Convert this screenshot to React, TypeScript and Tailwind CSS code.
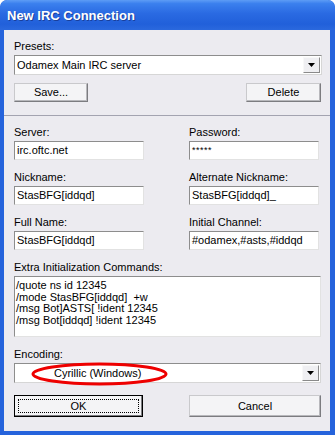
import React from "react";

const font = { fontFamily: '"Liberation Sans", Arial, sans-serif' };

function Label({ children }: { children: React.ReactNode }) {
  return <div className="h-[13px] leading-[13px] text-[11px] text-black">{children}</div>;
}

function TextBox({ value, small }: { value: string; small?: boolean }) {
  return (
    <div
      className={`h-[19px] w-full bg-white border border-t-[#8d8d8d] border-l-[#8d8d8d] border-b-[#e2e2e2] border-r-[#e2e2e2] pl-[2px] leading-[17px] text-black ${
        small ? "text-[9px] tracking-[0.5px]" : "text-[11px]"
      }`}
    >
      {value}
    </div>
  );
}

function ArrowButton() {
  return (
    <div className="absolute right-[1px] top-[1px] bottom-[1px] w-[17px] bg-[#efeff2] border border-t-[#f8f8f8] border-l-[#f8f8f8] border-b-[#8a8a8a] border-r-[#8a8a8a] flex items-center justify-center">
      <svg width="7" height="4" viewBox="0 0 7 4">
        <path d="M0 0H7L3.5 4Z" fill="#000" />
      </svg>
    </div>
  );
}

function Select({ value, indent = 2, children }: { value: string; indent?: number; children?: React.ReactNode }) {
  return (
    <div className="relative h-[20px] w-full bg-white border border-t-[#8d8d8d] border-l-[#8d8d8d] border-b-[#d6d6d6] border-r-[#d6d6d6] text-[11px] leading-[18px] text-black">
      <span style={{ paddingLeft: indent }}>{value}</span>
      <ArrowButton />
      {children}
    </div>
  );
}

function Button({ label, className = "" }: { label: string; className?: string }) {
  return (
    <div
      className={`flex items-center justify-center bg-[#f4f4f6] border border-t-[#c9c9cc] border-l-[#c9c9cc] border-b-[#7c7c80] border-r-[#7c7c80] shadow-[inset_-1px_-1px_0_#b8b8bc] text-[11px] text-black ${className}`}
    >
      {label}
    </div>
  );
}

export default function App() {
  return (
    <div style={font} className="w-[335px] h-[435px] bg-[#2563dc] rounded-t-[7px] flex flex-col overflow-hidden">
      <div className="h-[30px] shrink-0 flex items-center pl-[7px] rounded-t-[7px] bg-[linear-gradient(to_bottom,#5d9cf5_0%,#3b80ee_12%,#2a6ae2_45%,#2160da_80%,#2b69dd_100%)]">
        <span className="text-white font-bold text-[13px] leading-none [text-shadow:1px_1px_0_#1a3f9a]">
          New IRC Connection
        </span>
      </div>
      <div className="flex-1 ml-[4px] mr-[5px] mb-[4px] bg-[#ecebf0] flex flex-col">
        <div className="pl-[10px] pr-[8px] pt-[10px]">
          <Label>Presets:</Label>
          <div className="mt-[2px]">
            <Select value="Odamex Main IRC server" />
          </div>
          <div className="mt-[8px] flex justify-between pr-[1px]">
            <Button label="Save..." className="w-[74px] h-[19px]" />
            <Button label="Delete" className="w-[75px] h-[19px]" />
          </div>
        </div>
        <div className="mt-[13px] h-px bg-[#a3a3b0]" />
        <div className="pl-[10px] pr-[8px] pt-[10px] flex flex-col">
          <div className="grid grid-cols-[130px_130px] gap-x-[45px] gap-y-[11px]">
            <div>
              <Label>Server:</Label>
              <div className="mt-[2px]">
                <TextBox value="irc.oftc.net" />
              </div>
            </div>
            <div>
              <Label>Password:</Label>
              <div className="mt-[2px]">
                <TextBox value="*****" small />
              </div>
            </div>
            <div>
              <Label>Nickname:</Label>
              <div className="mt-[2px]">
                <TextBox value="StasBFG[iddqd]" />
              </div>
            </div>
            <div>
              <Label>Alternate Nickname:</Label>
              <div className="mt-[2px]">
                <TextBox value="StasBFG[iddqd]_" />
              </div>
            </div>
            <div>
              <Label>Full Name:</Label>
              <div className="mt-[2px]">
                <TextBox value="StasBFG[iddqd]" />
              </div>
            </div>
            <div>
              <Label>Initial Channel:</Label>
              <div className="mt-[2px]">
                <TextBox value="#odamex,#asts,#iddqd" />
              </div>
            </div>
          </div>
          <div className="mt-[11px]">
            <Label>Extra Initialization Commands:</Label>
          </div>
          <div className="mt-[2px] h-[61px] w-[307px] bg-white border border-t-[#8d8d8d] border-l-[#8d8d8d] border-b-[#e2e2e2] border-r-[#e2e2e2] pl-[1px] pt-[3px] text-[11px] leading-[11.5px] text-black">
            <div>/quote ns id 12345</div>
            <div>/mode StasBFG[iddqd]&nbsp; +w</div>
            <div>/msg Bot]ASTS[ !ident 12345</div>
            <div>/msg Bot[iddqd] !ident 12345</div>
          </div>
          <div className="mt-[11px]">
            <Label>Encoding:</Label>
          </div>
          <div className="mt-[2px] w-[307px]">
            <Select value="Cyrillic (Windows)" indent={39}>
              <svg
                className="absolute left-[16px] top-[-2px]"
                width="137"
                height="24"
                viewBox="0 0 137 24"
              >
                <ellipse cx="68.5" cy="12" rx="66.5" ry="10" fill="none" stroke="#ee0000" strokeWidth="3" />
              </svg>
            </Select>
          </div>
          <div className="mt-[12px] flex justify-between w-[307px]">
            <div className="w-[129px] h-[22px] border border-black bg-[#f4f4f6] shadow-[inset_-1px_-1px_0_#7c7c80] p-[3px]">
              <div className="h-full border border-dotted border-black flex items-center justify-center text-[11px] text-black">
                OK
              </div>
            </div>
            <Button label="Cancel" className="w-[132px] h-[22px]" />
          </div>
        </div>
      </div>
    </div>
  );
}
